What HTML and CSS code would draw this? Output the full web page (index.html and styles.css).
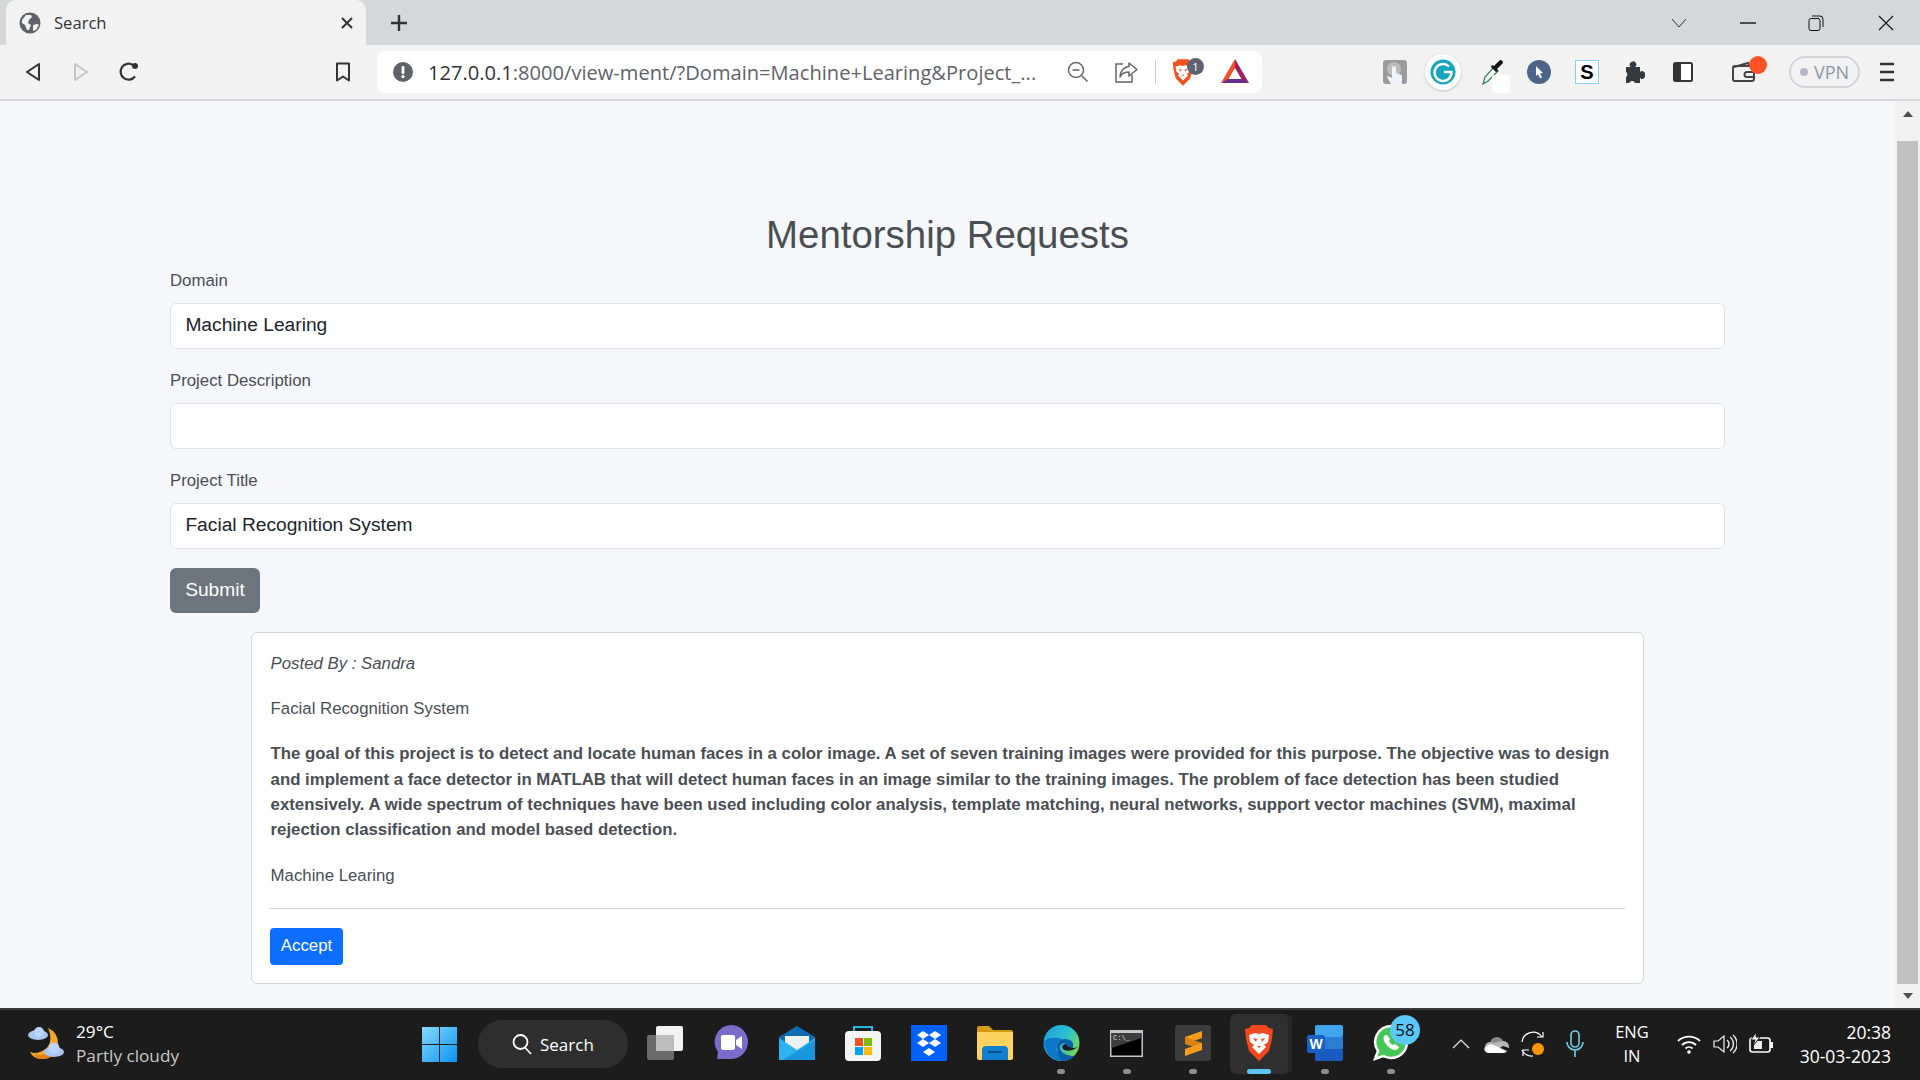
FILE: index.html
```html
<!DOCTYPE html>
<html lang="en">
<head>
    <meta charset="UTF-8">
    <title>Search</title>
    <link rel="stylesheet" href="styles.css">
</head>
<body>
    <div class="tabstrip">
        <div class="tab">
            <svg width="22" height="22" viewBox="0 0 22 22"><circle cx="11" cy="11" r="10.5" fill="#5f6368"/><path d="M3 8l4-5 5 0 1 2-3 3-1 3 3 2-2 5-2 0-2-5-3-2zM14 13l4-1 2 1-3 5-3 1z" fill="#f2f2f2"/></svg>
            <span class="tab-title">Search</span>
            <svg width="14" height="14" viewBox="0 0 14 14"><path d="M2 2l10 10M12 2L2 12" stroke="#333" stroke-width="2"/></svg>
        </div>
        <div class="newtab"><svg width="18" height="18" viewBox="0 0 18 18"><path d="M9 1v16M1 9h16" stroke="#333" stroke-width="2.4"/></svg></div>
        <div class="winctl">
            <div class="winbtn"><svg width="16" height="10" viewBox="0 0 16 10"><path d="M1 1l7 8 7-8" stroke="#333" fill="none"/></svg></div>
            <div class="winbtn"><svg width="16" height="2" viewBox="0 0 16 2"><path d="M0 1h16" stroke="#111" stroke-width="1.4"/></svg></div>
            <div class="winbtn"><svg width="16" height="16" viewBox="0 0 16 16"><rect x="1" y="3.5" width="11" height="12" rx="2" stroke="#111" fill="none"/><path d="M4 1h8a3 3 0 0 1 3 3v8" stroke="#111" fill="none"/></svg></div>
            <div class="winbtn"><svg width="16" height="16" viewBox="0 0 16 16"><path d="M1 1l14 14M15 1L1 15" stroke="#111" stroke-width="1.1"/></svg></div>
        </div>
    </div>

    <div class="toolbar">
        <div class="tool"><svg width="16" height="20" viewBox="0 0 16 20"><path d="M14 2L2 10l12 8z" fill="none" stroke="#333" stroke-width="2" stroke-linejoin="round"/></svg></div>
        <div class="tool"><svg width="16" height="20" viewBox="0 0 16 20"><path d="M2 2l12 8-12 8z" fill="none" stroke="#c6c6c6" stroke-width="2" stroke-linejoin="round"/></svg></div>
        <div class="tool"><svg width="22" height="22" viewBox="0 0 22 22"><path d="M17 15.5A8 8 0 1 1 15 4" fill="none" stroke="#333" stroke-width="2.2"/><circle cx="17" cy="5" r="3" fill="#333"/></svg></div>
        <div class="tool bookmark"><svg width="16" height="20" viewBox="0 0 16 20"><path d="M2 1.5h12v17l-6-4-6 4z" fill="none" stroke="#333" stroke-width="2" stroke-linejoin="round"/></svg></div>

        <div class="omnibox">
            <svg class="site-alert" width="20" height="20" viewBox="0 0 20 20"><circle cx="10" cy="10" r="10" fill="#5f6368"/><rect x="8.6" y="4" width="2.8" height="8" rx="1" fill="#fff"/><circle cx="10" cy="14.6" r="1.6" fill="#fff"/></svg>
            <div class="url"><span class="url-host">127.0.0.1</span>:8000/view-ment/?Domain=Machine+Learing&amp;Project_...</div>
            <div class="tool"><svg width="22" height="22" viewBox="0 0 22 22"><circle cx="9" cy="9" r="7.5" fill="none" stroke="#666" stroke-width="1.5"/><path d="M5.5 9h7M14.5 14.5l6 6" stroke="#666" stroke-width="1.5"/></svg></div>
            <div class="tool"><svg width="24" height="22" viewBox="0 0 24 22"><path d="M9 3H2v18h16v-7" fill="none" stroke="#666" stroke-width="1.5"/><path d="M15 2l8 6.5-8 6.5v-4c-4 0-7 1-9 5 0-6 4-10 9-10.500z" fill="none" stroke="#666" stroke-width="1.5" stroke-linejoin="round"/></svg></div>
            <div class="omni-sep"></div>
            <div class="ext-brave">
                <svg width="22" height="27" viewBox="0 0 30 36"><path d="M8 0h14l3 3 4 1-1 10-3 12-10 10-10-10L2 14 1 4l4-1z" fill="#f4511e"/><path d="M5 10l6-2 4 1 4-1 6 2-1 7-4 3 2 2-7 7-7-7 2-2-4-3z" fill="#fff"/><path d="M9 13l4 1-1 3zM21 13l-4 1 1 3zM13 21h4l-2 2z" fill="#f4511e"/></svg>
                <span class="ext-badge">1</span>
            </div>
            <div class="ext-bat"><svg width="28" height="26" viewBox="0 0 28 26"><path d="M14 0L0 24l7-3 7-12z" fill="#f2512a"/><path d="M14 0l14 24-7-3-7-12z" fill="#9e1f63"/><path d="M0 24h28l-7-4H7z" fill="#662d91"/><path d="M14 10l6 10H8z" fill="#fff"/></svg></div>
        </div>

        <div class="tool ext-first"><svg width="24" height="24" viewBox="0 0 24 24"><rect width="24" height="24" rx="3" fill="#9b9b9b"/><circle cx="11" cy="9" r="7" fill="#bdbdbd"/><path d="M9 8a2 2 0 0 1 4 0v5l6 2v9H8l-4-7 1-1 4 2z" fill="#eef3fb"/></svg></div>
        <div class="tool"><div class="grammarly"><svg width="26" height="26" viewBox="0 0 26 26"><circle cx="13" cy="13" r="12.500" fill="#15a5bd"/><path d="M19 7.500A8.500 8.500 0 1 0 21.500 13H14" fill="none" stroke="#fff" stroke-width="2.400"/></svg></div></div>
        <div class="tool"><svg class="dropper" width="24" height="28" viewBox="0 0 24 28"><path d="M2 26l2-7 9-10 4 4-10 10z" fill="#f4f4f4" stroke="#2f7d4c" stroke-width="1.200"/><path d="M13 8l4-4 2-2a3 3 0 0 1 3 3l-2 2-4 4 1 2-2 1-5-5 1-2z" fill="#111"/></svg><span class="dropper-mask"></span></div>
        <div class="tool"><svg width="24" height="24" viewBox="0 0 24 24"><circle cx="12" cy="12" r="12" fill="#4a6587"/><path d="M9 6l7 7-3 .4 2 4-2 .8-1.800-4L9 16z" fill="#fff"/></svg></div>
        <div class="tool"><span class="ext-s">S</span></div>
        <div class="tool"><svg width="22" height="24" viewBox="0 0 22 24"><path d="M2 7h4.500a3 3 0 0 1 1-5 3 3 0 0 1 3.500 5h5v5a3 3 0 0 1 5 3 3 3 0 0 1-5 3v5H11a3 3 0 0 0-5-1 3 3 0 0 0-1 1H2v-6a3 3 0 0 0 0-5z" fill="#353a3e"/></svg></div>
        <div class="tool"><svg width="20" height="20" viewBox="0 0 20 20"><rect x="1" y="1" width="18" height="18" rx="1.500" fill="#fff" stroke="#333" stroke-width="2"/><rect x="1" y="1" width="7" height="18" fill="#333"/></svg></div>
        <div class="tool wallet">
            <svg width="24" height="22" viewBox="0 0 24 22"><path d="M21 5H4a2 2 0 0 0-2 2v11a2 2 0 0 0 2 2h17a2 2 0 0 0 2-2V7a2 2 0 0 0-2-2z" fill="none" stroke="#444" stroke-width="2"/><path d="M3 6l14-4 2 3" fill="none" stroke="#444" stroke-width="2"/><path d="M23 11h-7a2.500 2.500 0 0 0 0 5h7" fill="none" stroke="#444" stroke-width="2"/></svg>
            <span class="wallet-dot"></span>
        </div>
        <div class="vpn"><span class="vpn-dot"></span>VPN</div>
        <div class="tool menu"><svg width="16" height="20" viewBox="0 0 16 20"><path d="M1 2h14M1 10h14M1 18h14" stroke="#333" stroke-width="2.400"/></svg></div>
    </div>

    <div class="page">
        <main class="content">
            <h2 class="title">Mentorship Requests</h2>
            <form class="request-form">
                <label class="form-label">Domain</label>
                <input class="form-input" type="text" value="Machine Learing">
                <label class="form-label">Project Description</label>
                <input class="form-input" type="text">
                <label class="form-label">Project Title</label>
                <input class="form-input" type="text" value="Facial Recognition System">
                <button class="btn-submit" type="button">Submit</button>
            </form>
            <div class="card">
                <p class="posted">Posted By : Sandra</p>
                <p>Facial Recognition System</p>
                <p class="desc">The goal of this project is to detect and locate human faces in a color image. A set of seven training images were provided for this purpose. The objective was to design and implement a face detector in MATLAB that will detect human faces in an image similar to the training images. The problem of face detection has been studied extensively. A wide spectrum of techniques have been used including color analysis, template matching, neural networks, support vector machines (SVM), maximal rejection classification and model based detection.</p>
                <p>Machine Learing</p>
                <hr class="card-line">
                <button class="btn-accept" type="button">Accept</button>
            </div>
        </main>
        <div class="scrollbar">
            <span class="arrow-up"></span>
            <div class="thumb"></div>
            <span class="arrow-down"></span>
        </div>
    </div>

    <div class="taskbar">
        <div class="weather">
            <svg width="36" height="36" viewBox="0 0 36 36"><path d="M20 2a16 16 0 0 1 10 16c0 9-8 16-17 15-5 0-9-3-11-7 8 3 18-2 20-10 1-5 0-10-2-14z" fill="#f0a92c"/><path d="M6 28c8 3 16 0 19-7l5 3c-2 6-9 9-17 9-3 0-6-2-7-5z" fill="#e57f1d"/><ellipse cx="10" cy="9" rx="10" ry="5" fill="#a9c6ee"/><circle cx="11" cy="6" r="5" fill="#bcd4f5"/><ellipse cx="26" cy="26" rx="10" ry="5" fill="#a9c6ee"/><circle cx="26" cy="22" r="5.500" fill="#bcd4f5"/></svg>
            <div class="weather-text">
                <div class="weather-temp">29°C</div>
                <div class="weather-desc">Partly cloudy</div>
            </div>
        </div>
        <svg class="winlogo" width="35" height="35" viewBox="0 0 35 35">
            <defs><linearGradient id="win" x1="0" y1="0" x2="1" y2="1"><stop offset="0" stop-color="#86dcfc"/><stop offset="1" stop-color="#0b92f4"/></linearGradient></defs>
            <path d="M0 0h17v17H0zM18 0h17v17H18zM0 18h17v17H0zM18 18h17v17H18z" fill="url(#win)"/>
        </svg>
        <div class="searchbox">
            <svg width="20" height="22" viewBox="0 0 20 22"><circle cx="8.500" cy="9" r="7" fill="none" stroke="#fff" stroke-width="1.800"/><path d="M13 14.500l6 6.500" stroke="#fff" stroke-width="1.800"/></svg>
            <span>Search</span>
        </div>

        <div class="tasklist">
            <div class="task"><svg width="36" height="34" viewBox="0 0 36 34"><rect x="9" y="0" width="27" height="25" rx="2" fill="#f2f2f2"/><rect x="0" y="9" width="27" height="25" rx="2" fill="#6b6b6b"/><rect x="9" y="9" width="18" height="16" fill="#bdbdbd"/></svg></div>
            <div class="task"><svg width="34" height="36" viewBox="0 0 34 36"><path d="M17 0a17 17 0 0 1 0 34H3l1-7A17 17 0 0 1 17 0z" fill="#7a6cc8"/><rect x="7" y="10" width="14" height="15" rx="2" fill="#fff"/><path d="M22 15l6-4v13l-6-4z" fill="#fff"/></svg></div>
            <div class="task"><svg width="36" height="34" viewBox="0 0 36 34"><path d="M0 11L18 0l18 11v23H0z" fill="#0f6cb3"/><path d="M6 10h24v8l-12 8-12-8z" fill="#eef1f4"/><path d="M0 12l18 12 18-12v22H0z" fill="#2db4ee"/><path d="M36 34H4l32-20z" fill="#1795dd"/></svg></div>
            <div class="task"><svg width="36" height="36" viewBox="0 0 36 36"><path d="M9 7V2h18v5" fill="none" stroke="#2cb5e8" stroke-width="2"/><rect y="6" width="36" height="30" rx="4" fill="#f4f4f4"/><rect x="10" y="13" width="8" height="8" fill="#f25022"/><rect x="19" y="13" width="8" height="8" fill="#7fba00"/><rect x="10" y="22" width="8" height="8" fill="#00a4ef"/><rect x="19" y="22" width="8" height="8" fill="#ffb900"/></svg></div>
            <div class="task"><svg width="36" height="36" viewBox="0 0 36 36"><rect width="36" height="36" fill="#0061fe"/><path d="M12 6l6 4-6 4-6-4zM24 6l6 4-6 4-6-4zM12 14l6 4-6 4-6-4zM24 14l6 4-6 4-6-4zM18 23l6 4-6 4-6-4z" fill="#fff"/></svg></div>
            <div class="task"><svg width="36" height="34" viewBox="0 0 36 34"><path d="M0 2a2 2 0 0 1 2-2h10l4 4h18a2 2 0 0 1 2 2v26H0z" fill="#d59b10"/><path d="M0 6h36v26a2 2 0 0 1-2 2H2a2 2 0 0 1-2-2z" fill="#fcd45f"/><path d="M5 34V24a4 4 0 0 1 4-4h18a4 4 0 0 1 4 4v10z" fill="#0f7fd0"/><path d="M11 26h14" stroke="#0a4f8c" stroke-width="2"/></svg></div>
            <div class="task has-dot"><svg width="37" height="36" viewBox="0 0 37 36"><defs><linearGradient id="edge" x1="0" y1="0" x2="1" y2="0.600"><stop offset="0" stop-color="#1a9fe0"/><stop offset="0.600" stop-color="#2fc0cf"/><stop offset="1" stop-color="#72d758"/></linearGradient></defs><circle cx="18.500" cy="18" r="18" fill="url(#edge)"/><path d="M1 16c0 12 8 20 18 20 5 0 9-2 12-5-6 2-14 1-17-5-2-5 0-10 5-12-9-3-15 0-18 2z" fill="#0d78c9"/><path d="M14 24c-2-5 2-10 8-10 5 0 9 3 8 7 1 3-5 4-7 2-2-1-1-3 0-4-3-2-7 1-6 5 2 5 9 7 14 7-3 3-8 5-12 5-3-3-4-8-5-12z" fill="#0b5ea8"/><path d="M23 19c-3 0-5 3-3 5 3 3 11 2 16-3-3 3-10 2-12 0-1-1-1-2-1-2z" fill="#1c1c1c"/></svg></div>
            <div class="task has-dot"><svg class="cmd-icon" width="33" height="27" viewBox="0 0 33 27"><rect width="33" height="27" fill="#c4c8cc"/><rect x="1.500" y="3" width="30" height="22.500" fill="#000"/><path d="M1.500 3h30v5L1.500 18z" fill="#3d3d3d"/><text class="cmd-text" x="3" y="10">C:\_</text></svg></div>
            <div class="task has-dot"><svg width="36" height="36" viewBox="0 0 36 36"><rect width="36" height="36" rx="3" fill="#3c3c3c"/><path d="M27 6v7L10 19v-7z" fill="#f89b1c"/><path d="M10 12l17 6v7L10 19z" fill="#d9820f"/><path d="M27 18v7l-17 6v-7z" fill="#f89b1c"/></svg></div>
            <div class="task active"><svg width="30" height="36" viewBox="0 0 30 36"><path d="M8 0h14l3 3 4 1-1 10-3 12-10 10-10-10L2 14 1 4l4-1z" fill="#f1481f"/><path d="M5 10l6-2 4 1 4-1 6 2-1 7-4 3 2 2-7 7-7-7 2-2-4-3z" fill="#fff"/><path d="M9 13l4 1-1 3zM21 13l-4 1 1 3zM13 21h4l-2 2z" fill="#f1481f"/></svg></div>
            <div class="task has-dot"><svg width="36" height="36" viewBox="0 0 36 36"><rect x="8" y="0" width="28" height="12" rx="2" fill="#41a5ee"/><rect x="8" y="12" width="28" height="12" fill="#2b7cd3"/><rect x="8" y="24" width="28" height="12" rx="2" fill="#185abd"/><rect x="0" y="10" width="18" height="18" rx="2" fill="#1a5fc4"/><text class="word-text" x="9" y="24" text-anchor="middle">W</text></svg></div>
            <div class="task has-dot"><svg width="36" height="38" viewBox="0 0 36 38"><path d="M18 2a16 16 0 0 1 0 32c-3 0-5-1-8-2l-8 3 3-8a16 16 0 0 1 13-25z" fill="#45c655" stroke="#fff" stroke-width="2.500"/><path d="M12 11c-2 2-2 5 1 9s7 6 9 6 4-2 4-3l-4-3-2 1c-2-1-3-2-4-4l1-2-3-4z" fill="#fff"/></svg><span class="task-badge">58</span></div>
        </div>

        <div class="tray-item chevron"><svg width="18" height="10" viewBox="0 0 18 10"><path d="M1 9l8-8 8 8" fill="none" stroke="#eee" stroke-width="1.200"/></svg></div>
        <div class="tray-item"><svg width="26" height="18" viewBox="0 0 26 18"><path d="M7 5a7 7 0 0 1 12 1l-8 7H5z" fill="#8a8a8a"/><path d="M1 12a5 5 0 0 1 8-4l10-2a6 6 0 0 1 6 7l-6-2-9 6z" fill="#b8b8b8"/><path d="M4 18a4 4 0 0 1-3-6l6-3 16 7c-1 1-2 2-3 2z" fill="#fff"/></svg></div>
        <div class="tray-item"><svg width="26" height="26" viewBox="0 0 26 26"><path d="M2 11a11 11 0 0 1 20-5M23 1v5h-6M3 25v-6h6M2 19a11 11 0 0 0 11 6" fill="none" stroke="#fff" stroke-width="1.200"/><circle cx="18" cy="18" r="6" fill="#ff9800"/></svg></div>
        <div class="tray-item mic"><svg width="20" height="28" viewBox="0 0 20 28"><rect x="6" y="1" width="8" height="16" rx="4" fill="none" stroke="#6fd3ec" stroke-width="1.600"/><path d="M2 12a8 8 0 0 0 16 0M10 20v7" fill="none" stroke="#6fd3ec" stroke-width="1.600"/></svg></div>
        <div class="lang"><div>ENG</div><div>IN</div></div>
        <div class="tray-item wifi"><svg width="24" height="20" viewBox="0 0 24 20"><path d="M1 7a16 16 0 0 1 22 0M5 11a10 10 0 0 1 14 0M8.500 14.500a5 5 0 0 1 7 0" fill="none" stroke="#fff" stroke-width="1.800"/><circle cx="12" cy="18" r="1.800" fill="#fff"/></svg></div>
        <div class="tray-item"><svg width="24" height="22" viewBox="0 0 24 22"><path d="M1 8h4l6-5v16l-6-5H1z" fill="none" stroke="#eee" stroke-width="1.200"/><path d="M14 7a5 5 0 0 1 0 8M17 4a9 9 0 0 1 0 14M20 2a12 12 0 0 1 0 18" fill="none" stroke="#eee" stroke-width="1.400"/></svg></div>
        <div class="tray-item"><svg width="26" height="24" viewBox="0 0 26 24"><rect x="2" y="6" width="20" height="14" rx="2.500" fill="none" stroke="#fff" stroke-width="1.600"/><rect x="6" y="9" width="8" height="8" fill="#eee"/><rect x="22" y="10" width="3" height="6" fill="#fff"/><path d="M8 0L3 8h4l-2 6 7-9H8z" fill="#fff" stroke="#1c1c1c"/></svg></div>
        <div class="clock">
            <div>20:38</div>
            <div>30-03-2023</div>
        </div>
    </div>
</body>
</html>
```

FILE: styles.css
```css
* {
    margin: 0;
    padding: 0;
    box-sizing: border-box;
}
body {
    width: 1920px;
    height: 1080px;
    overflow: hidden;
    display: flex;
    flex-direction: column;
    font-family: "Liberation Sans", Arial, sans-serif;
    background: #f6f7fb;
}

/* browser chrome */
.tabstrip {
    height: 45px;
    display: flex;
    align-items: flex-end;
    padding-left: 6px;
    background: #d5d8db;
}
.tab {
    width: 360px;
    height: 45px;
    display: flex;
    align-items: center;
    padding: 0 12px 0 13px;
    background: #f2f2f2;
    border-radius: 10px 10px 0 0;
}
.tab-title {
    flex: 1;
    margin-left: 13px;
    font: 16.6px "Open Sans", sans-serif;
    color: #333;
}
.newtab {
    width: 36px;
    height: 45px;
    margin-left: 15px;
    display: flex;
    align-items: center;
    justify-content: center;
}
.winctl {
    margin-left: auto;
    display: flex;
}
.winbtn {
    width: 68.5px;
    height: 45px;
    display: flex;
    align-items: center;
    justify-content: center;
}
.winbtn:last-child {
    width: 69.5px;
    padding-left: 1px;
}
.toolbar {
    height: 56px;
    display: flex;
    align-items: center;
    padding-left: 9px;
    background: #f2f2f2;
    border-bottom: 2px solid #d5d8db;
}
.tool {
    position: relative;
    width: 48px;
    height: 42px;
    flex: none;
    display: flex;
    align-items: center;
    justify-content: center;
}
.bookmark {
    margin-left: 166px;
}
.omnibox {
    width: 885px;
    height: 42px;
    margin-left: 10px;
    display: flex;
    align-items: center;
    padding: 0 7px 0 16px;
    background: #fff;
    border-radius: 8px;
}
.site-alert {
    flex: none;
}
.url {
    flex: 1;
    margin-left: 15px;
    font: 20.1px "Open Sans", sans-serif;
    color: #5f6368;
    white-space: nowrap;
    overflow: hidden;
}
.url-host {
    color: #333;
}
.omni-sep {
    width: 1px;
    height: 24px;
    margin-left: 5px;
    background: #ccc;
}
.ext-brave {
    position: relative;
    width: 40px;
    margin-left: 7px;
    display: flex;
    justify-content: center;
}
.ext-badge {
    position: absolute;
    top: -1px;
    left: 24px;
    width: 17px;
    height: 17px;
    border-radius: 50%;
    background: #5f6370;
    color: #fff;
    font: 11px/17px "Open Sans", sans-serif;
    text-align: center;
}
.ext-bat {
    width: 40px;
    margin-left: 12px;
    display: flex;
    justify-content: center;
}
.ext-first {
    margin-left: 109px;
}
.grammarly {
    width: 36px;
    height: 36px;
    display: flex;
    align-items: center;
    justify-content: center;
    background: #fff;
    border-radius: 50%;
    box-shadow: 0 1px 3px rgba(0, 0, 0, 0.2);
}
.dropper {
    margin-left: 4px;
}
.dropper-mask {
    position: absolute;
    left: 25px;
    top: 24px;
    width: 18px;
    height: 18px;
    background: #fff;
    border-radius: 2px;
}
.ext-s {
    width: 24px;
    height: 24px;
    border: 1px solid #7fd0f2;
    background: #fff;
    color: #000;
    font: bold 20px/22px "Liberation Sans", sans-serif;
    text-align: center;
}
.wallet {
    margin-left: 12px;
}
.wallet-dot {
    position: absolute;
    left: 30px;
    top: 5px;
    width: 18px;
    height: 18px;
    background: #ff5126;
    border-radius: 50%;
}
.vpn {
    width: 71px;
    height: 32px;
    margin-left: 22px;
    display: flex;
    align-items: center;
    justify-content: center;
    gap: 6px;
    border: 2px solid #d3d5d8;
    border-radius: 16px;
    font: 18px "Open Sans", sans-serif;
    color: #8d96a6;
}
.vpn-dot {
    width: 8px;
    height: 8px;
    border-radius: 50%;
    background: #b4b8cc;
}
.menu {
    margin-left: 3px;
}

/* page */
.page {
    height: 907px;
    display: flex;
}
.content {
    flex: 1;
    padding: 111px 170px 0 170px;
    color: #4a4e52;
    font-size: 16.8px;
    line-height: 25.2px;
}
.title {
    height: 46px;
    margin-bottom: 10px;
    font-size: 38.4px;
    font-weight: 400;
    line-height: 46px;
    text-align: center;
}
.form-label {
    display: block;
    height: 25px;
    margin-bottom: 10px;
}
.form-input {
    display: block;
    width: 100%;
    height: 46px;
    margin-bottom: 19px;
    padding: 0 14.4px 2px;
    border: 1px solid #dee2e6;
    border-radius: 6px;
    background: #fff;
    color: #212529;
    font: 19.2px "Liberation Sans", sans-serif;
}
.btn-submit {
    display: block;
    width: 90px;
    height: 45px;
    padding-bottom: 2px;
    border: none;
    border-radius: 6px;
    background: #6c757d;
    color: #fff;
    font: 19.2px "Liberation Sans", sans-serif;
}
.card {
    height: 352px;
    margin: 19px 81px 0;
    padding: 18px 18px 0 18.6px;
    border: 1px solid #d3d5d9;
    border-radius: 6px;
    background: #fff;
}
.card p {
    margin-bottom: 20px;
}
.posted {
    font-style: italic;
}
.desc {
    font-weight: bold;
    line-height: 25.3px;
}
.card-line {
    border: none;
    border-top: 1px solid #cfd0d2;
    margin: 20px 0 19px -0.6px;
}
.btn-accept {
    display: block;
    width: 73px;
    height: 37px;
    margin-left: -0.6px;
    border: none;
    border-radius: 4px;
    background: #0d6efd;
    color: #fff;
    font: 16.8px "Liberation Sans", sans-serif;
}
.scrollbar {
    width: 25px;
    display: flex;
    flex-direction: column;
    align-items: center;
    background: #f1f1f1;
}
.arrow-up,
.arrow-down {
    width: 0;
    height: 0;
    border-left: 5.5px solid transparent;
    border-right: 5.5px solid transparent;
}
.arrow-up {
    margin-top: 10px;
    border-bottom: 6px solid #505050;
}
.thumb {
    width: 21px;
    height: 843px;
    margin-top: 24px;
    background: #c1c1c1;
}
.arrow-down {
    margin-top: 9px;
    border-top: 6px solid #505050;
}

/* windows taskbar */
.taskbar {
    height: 72px;
    display: flex;
    align-items: center;
    padding-bottom: 2px;
    border-top: 2px solid #3a3a3a;
    background: #1c1c1c;
    color: #fff;
    font-family: "Open Sans", sans-serif;
}
.weather {
    width: 422px;
    display: flex;
    align-items: center;
    padding-left: 28px;
}
.weather-text {
    margin-left: 12px;
    font-size: 17.2px;
    line-height: 24px;
}
.weather-desc {
    color: #c8c8c8;
}
.winlogo {
    flex: none;
}
.searchbox {
    width: 150px;
    height: 48px;
    margin-left: 21px;
    display: flex;
    align-items: center;
    gap: 8px;
    padding-left: 34px;
    background: #2e2e2e;
    border-radius: 24px;
    font-size: 17px;
}
.tasklist {
    margin-left: 4px;
    display: flex;
}
.task {
    position: relative;
    width: 66px;
    height: 60px;
    padding-bottom: 2px;
    display: flex;
    align-items: center;
    justify-content: center;
}
.has-dot::after,
.active::after {
    content: "";
    position: absolute;
    left: 29px;
    bottom: 0;
    width: 8px;
    height: 5px;
    border-radius: 3px;
    background: #8e8e8e;
}
.active {
    background: #2f2f2f;
    border-radius: 6px;
    width: 58px;
    margin: 0 4px;
    box-shadow: 4px 0 0 #262626;
}
.active::after {
    left: 17px;
    width: 24px;
    background: #5cc5f5;
}
.task-badge {
    position: absolute;
    left: 32px;
    top: 1px;
    width: 30px;
    height: 30px;
    border-radius: 50%;
    background: #5cc8f8;
    color: #111;
    font-size: 17px;
    line-height: 30px;
    text-align: center;
}
.cmd-icon {
    margin-right: 1px;
}
.cmd-text {
    font: 7px "Liberation Mono", monospace;
    fill: #ddd;
}
.word-text {
    font: bold 14px "Liberation Sans", sans-serif;
    fill: #fff;
}
.tray-item {
    width: 36px;
    flex: none;
    display: flex;
    align-items: center;
    justify-content: center;
}
.chevron {
    margin-left: 19px;
}
.mic {
    margin-left: 6px;
}
.lang {
    width: 50px;
    margin-left: 14px;
    font-size: 16.5px;
    line-height: 24px;
    text-align: center;
}
.wifi {
    margin-left: 14px;
}
.clock {
    margin-left: auto;
    padding-right: 29px;
    font-size: 17.5px;
    line-height: 24px;
    text-align: right;
}
```
